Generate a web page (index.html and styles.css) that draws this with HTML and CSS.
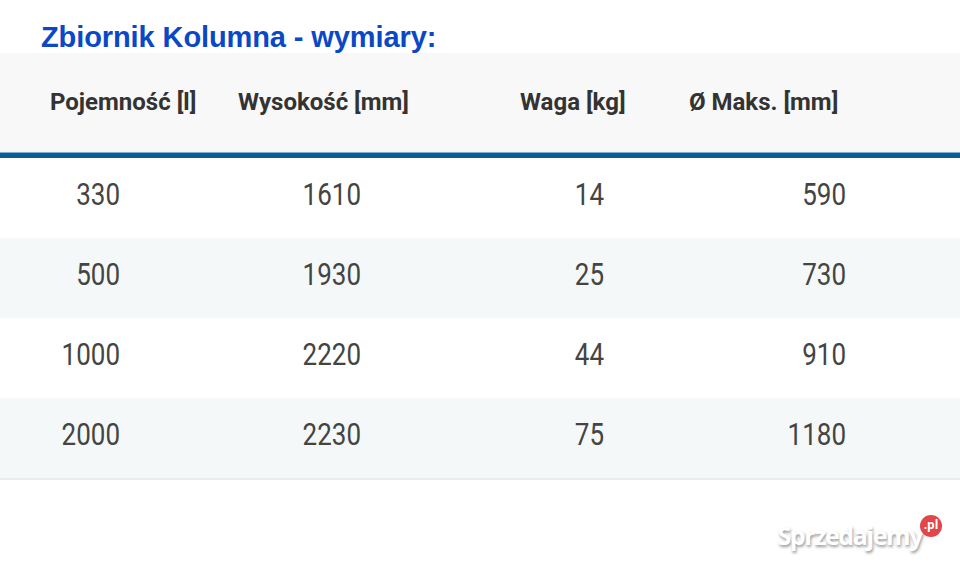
FILE: index.html
```html
<!DOCTYPE html>
<html lang="pl">
<head>
<meta charset="utf-8">
<link rel="stylesheet" href="styles.css">
</head>
<body>
<div class="page">
  <h1 class="title">Zbiornik Kolumna - wymiary:</h1>
  <div class="table">
    <div class="row head">
      <div class="cell c1">Pojemność [l]</div>
      <div class="cell c2">Wysokość [mm]</div>
      <div class="cell c3">Waga [kg]</div>
      <div class="cell c4">Ø Maks. [mm]</div>
    </div>
    <div class="row body">
      <div class="cell c1"><span class="num">330</span></div>
      <div class="cell c2"><span class="num">1610</span></div>
      <div class="cell c3"><span class="num">14</span></div>
      <div class="cell c4"><span class="num">590</span></div>
    </div>
    <div class="row body alt">
      <div class="cell c1"><span class="num">500</span></div>
      <div class="cell c2"><span class="num">1930</span></div>
      <div class="cell c3"><span class="num">25</span></div>
      <div class="cell c4"><span class="num">730</span></div>
    </div>
    <div class="row body">
      <div class="cell c1"><span class="num">1000</span></div>
      <div class="cell c2"><span class="num">2220</span></div>
      <div class="cell c3"><span class="num">44</span></div>
      <div class="cell c4"><span class="num">910</span></div>
    </div>
    <div class="row body alt last">
      <div class="cell c1"><span class="num">2000</span></div>
      <div class="cell c2"><span class="num">2230</span></div>
      <div class="cell c3"><span class="num">75</span></div>
      <div class="cell c4"><span class="num">1180</span></div>
    </div>
  </div>
  <div class="footer">
    <div class="brand">
      <span class="brand-name">Sprzedajemy</span>
      <span class="brand-pl">.pl</span>
    </div>
  </div>
</div>
</body>
</html>
```
FILE: styles.css
```css
html, body {
  margin: 0;
  padding: 0;
  background: #ffffff;
}
.page {
  width: 960px;
  height: 571px;
  overflow: hidden;
  position: relative;
}
.title {
  margin: 0;
  height: 53px;
  box-sizing: border-box;
  padding: 22px 0 0 41px;
  font-family: "Liberation Sans", Arial, sans-serif;
  font-weight: bold;
  font-size: 29px;
  line-height: 30px;
  color: #0b48c6;
  letter-spacing: -0.1px;
}
.row {
  display: grid;
  grid-template-columns: 225px 245px 190px 300px;
}
.head {
  height: 100px;
  background: #f8f8f8;
  border-bottom: 5px solid #0b5f97;
  box-shadow: inset 0 -1px 0 #7fb0d4;
  align-items: center;
  font-family: Roboto, "Noto Sans", sans-serif;
  font-weight: bold;
  font-size: 24px;
  color: #333333;
}
.head .cell {
  padding-bottom: 2px;
}
.head .c1 { padding-left: 50px; }
.head .c2 { padding-left: 13px; }
.head .c3 { padding-left: 50px; }
.head .c4 { padding-left: 29px; }
.body {
  height: 80px;
  align-items: center;
  font-family: Roboto, "Noto Sans", sans-serif;
  font-size: 26px;
  color: #444444;
  text-align: right;
}
.body .cell { padding-bottom: 8px; }
.body.alt { background: #f4f8f9; }
.body.last { border-bottom: 2px solid #ececec; }
.body .c1 { padding-right: 105px; }
.body .c2 { padding-right: 109px; }
.body .c3 { padding-right: 56px; }
.body .c4 { padding-right: 114px; }
.num {
  display: inline-block;
  transform: scaleY(1.24);
}
.footer {
  display: flex;
  justify-content: flex-end;
  padding: 38px 38px 0 0;
}
.brand {
  position: relative;
  font-family: "Open Sans", "Noto Sans", sans-serif;
  font-weight: bold;
  font-size: 25px;
  letter-spacing: -1.4px;
  color: #ffffff;
  text-shadow: 1px 2px 3px rgba(0,0,0,0.4);
}
.brand-pl {
  position: absolute;
  right: -20px;
  top: -3px;
  width: 22px;
  height: 22px;
  border-radius: 50%;
  background: #e0464a;
  color: #fff;
  font-size: 12px;
  font-weight: bold;
  line-height: 20px;
  text-align: center;
  letter-spacing: 0;
  text-shadow: none;
}
```
